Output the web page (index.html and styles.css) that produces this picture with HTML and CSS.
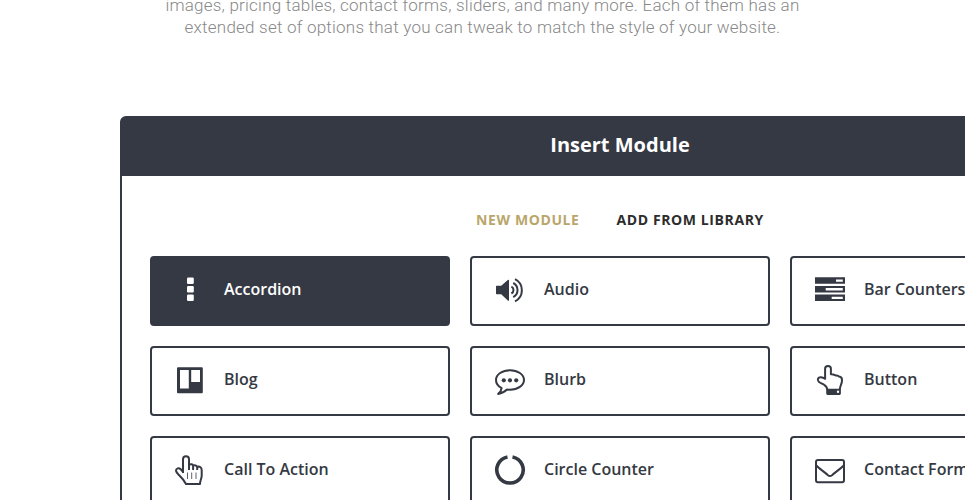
FILE: index.html
```
<!DOCTYPE html>
<html lang="en">
<head>
    <meta charset="UTF-8">
    <meta name="viewport" content="width=device-width, initial-scale=1.0">
    <title>Insert Module</title>
    <link rel="stylesheet" href="styles.css">
</head>
<body>
    <p class="intro">
        images, pricing tables, contact forms, sliders, and many more. Each of them has an<br>
        extended set of options that you can tweak to match the style of your website.
    </p>

    <div class="modal">
        <h2 class="modal-header">Insert Module</h2>

        <div class="tabs">
            <a class="tab active">New Module</a>
            <a class="tab">Add From Library</a>
        </div>

        <div class="modules">
            <div class="module active">
                <svg class="icon" viewBox="0 0 32 32">
                    <rect x="13" y="3.4" width="6.8" height="6.6" rx="1.3"/>
                    <rect x="13" y="12" width="6.8" height="6.6" rx="1.3"/>
                    <rect x="13" y="20.5" width="6.8" height="6.6" rx="1.3"/>
                </svg>
                <span>Accordion</span>
            </div>
            <div class="module">
                <svg class="icon" viewBox="0 0 32 32">
                    <path d="M2.6 11.7h4.6l6.6-5.6q1.200-.8 1.200.6v19.200q0 1.400-1.200.6l-6.600-6.300H2.600q-.6 0-.6-.6v-7.300q0-.6.6-.6z"/>
                    <path class="line" d="M17.400 12.700a3.800 3.800 0 0 1 0 6.800M19.200 9a8 8 0 0 1 0 14.200M21 5.200a12.400 12.400 0 0 1 0 22.200"/>
                </svg>
                <span>Audio</span>
            </div>
            <div class="module">
                <svg class="icon" viewBox="0 0 32 32">
                    <path fill-rule="evenodd" d="M1 3.300h30v6.500H1zM22 5.400v2.300h6.800V5.400zM1 12h30v6.500H1zM11.700 14v2.400h17.100V14zM1 20.600h30v6.500H1zM17.700 22.700V25h11.100v-2.300z"/>
                </svg>
                <span>Bar Counters</span>
            </div>
            <div class="module">
                <svg class="icon" viewBox="0 0 32 32">
                    <path fill-rule="evenodd" d="M4 3.300h23.800q1 0 1 1v24q0 1-1 1H4q-1 0-1-1v-24q0-1 1-1zM6 6v18.400h8.800V6zM17.200 6v12H26V6z"/>
                </svg>
                <span>Blog</span>
            </div>
            <div class="module">
                <svg class="icon" viewBox="0 0 32 32">
                    <path class="line" d="M16 6.200c7.700 0 14 4.300 14 9.800s-6.300 9.700-14 9.700q-1.600 0-3-.2-3.600 3.600-8.800 4.400 3-2.400 3.400-5.800C4.200 22.300 2 19.400 2 16c0-5.500 6.300-9.800 14-9.800z"/>
                    <circle cx="9.800" cy="16.300" r="2.100"/>
                    <circle cx="16" cy="16.300" r="2.100"/>
                    <circle cx="22.200" cy="16.300" r="2.100"/>
                </svg>
                <span>Blurb</span>
            </div>
            <div class="module">
                <svg class="icon" viewBox="0 0 32 32">
                    <path class="line" d="M13.200 25.500c0-2.200-1.200-3.500-3-4.700-2-1.400-4-1.700-5.400-3C2.800 15.800 4 13.200 6.600 13.200c2 0 3 .8 4.500 1.600V4.800c0-3.700 5.800-3.700 5.800 0v5.500c3.200-.2 3.600.8 5 1.300 1.300-.3 2.500.1 3.200 1 2 .2 3 1.500 2.900 3.800 0 3.600-2.200 5.600-2.200 9.100"/>
                    <path fill-rule="evenodd" d="M12.200 24.800h14.700v4.800q0 1.400-1.400 1.400H13.600q-1.400 0-1.400-1.400zM24 26.600a1.200 1.200 0 1 0 0 2.400 1.200 1.200 0 0 0 0-2.400z"/>
                </svg>
                <span>Button</span>
            </div>
            <div class="module">
                <svg class="icon" viewBox="0 0 32 32">
                    <path class="line" d="M9 19V5.200c0-3.900 6-3.900 6 0v5.600c1.900-1 3.500-.5 4.100.7 1.800-.6 3.200-.1 4 1.200 3-.4 4.600.8 4.600 3.500v5.300c0 3.200-1.700 5-1.700 8.500H12c-2-4-4.200-6.200-6.800-8.700C3.300 19.500 2 18.300 2 16.600c0-2.300 2.800-3.200 4.700-1.300L9 17.800M15 10v6M19.100 11.500V16M23.200 12.700V16"/>
                    <path class="thin" d="M13.500 18.500v6.500M17.700 18.500v6.500M22 18.500v6.500"/>
                </svg>
                <span>Call To Action</span>
            </div>
            <div class="module">
                <svg class="icon" viewBox="0 0 32 32">
                    <path class="ring" d="M13.500 2.900a13.200 13.200 0 1 0 5 0"/>
                </svg>
                <span>Circle Counter</span>
            </div>
            <div class="module">
                <svg class="icon" viewBox="0 0 32 32">
                    <rect class="line" x="2" y="6" width="28" height="22.300" rx="2"/>
                    <path class="line" d="M2 11.200c4.200 4.200 8 6.500 12 10q2 1.600 4 0c4-3.500 7.800-5.800 12-10"/>
                </svg>
                <span>Contact Form</span>
            </div>
        </div>
    </div>
</body>
</html>
```
FILE: styles.css
```
* {
    box-sizing: border-box;
}

body {
    margin: 0;
    height: 500px;
    overflow: hidden;
    background: #fff;
    font-family: "Open Sans", sans-serif;
    color: #353943;
}

.intro {
    margin: -6px 0 78px;
    text-align: center;
    font-family: Roboto, sans-serif;
    font-size: 17px;
    font-weight: 300;
    line-height: 22px;
    letter-spacing: 0.22px;
    color: #888;
}

/* Dialog is wider than the visible area */
.modal {
    width: 1000px;
    margin-left: 120px;
    border: 2px solid #353943;
    border-radius: 6px;
}

.modal-header {
    margin: 0;
    height: 58px;
    line-height: 54px;
    background: #353943;
    color: #fff;
    text-align: center;
    font-size: 20px;
    font-weight: 700;
}

.tabs {
    display: flex;
    justify-content: center;
    gap: 37px;
    height: 80px;
    padding-top: 34px;
    font-size: 14px;
    font-weight: 700;
    line-height: 20px;
    letter-spacing: 0.6px;
    text-transform: uppercase;
}

.tab {
    color: #2d2d2d;
}

.tab.active {
    color: #b9a66b;
}

.modules {
    display: grid;
    grid-template-columns: repeat(3, 300px);
    gap: 20px;
    padding: 0 28px 28px;
}

.module {
    display: flex;
    align-items: center;
    gap: 18px;
    height: 70px;
    padding: 0 22px;
    border: 2px solid #353943;
    border-radius: 4px;
    font-size: 16px;
    font-weight: 600;
    white-space: nowrap;
}

.module span {
    margin-top: -4px;
}

.module.active {
    background: #353943;
    color: #fff;
}

.icon {
    flex: none;
    width: 32px;
    height: 32px;
    margin-top: -2px;
    fill: currentColor;
}

.icon .line,
.icon .thin,
.icon .ring {
    fill: none;
    stroke: currentColor;
    stroke-width: 2;
    stroke-linejoin: round;
}

.icon .thin {
    stroke-width: 0.8;
}

.icon .ring {
    stroke-width: 3.6;
}
```
